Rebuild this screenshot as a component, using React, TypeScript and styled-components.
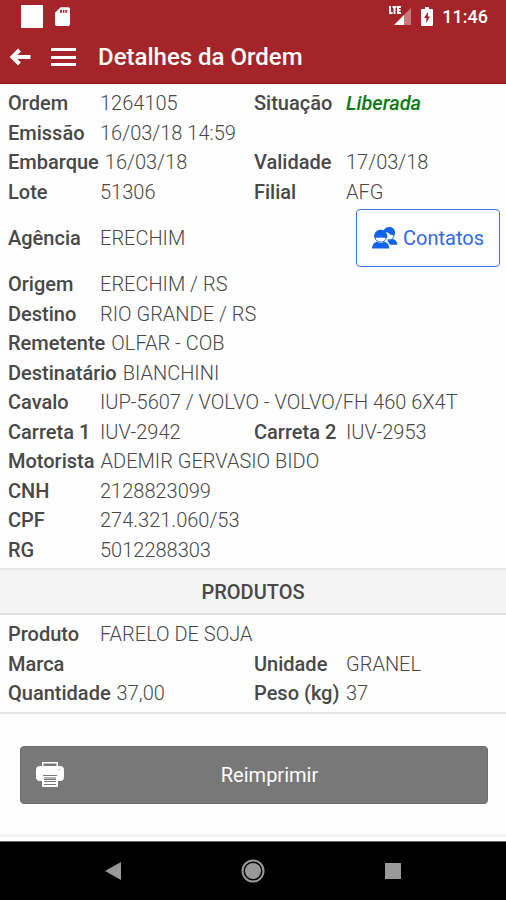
import React from "react";
import styled, { createGlobalStyle } from "styled-components";

const GlobalStyle = createGlobalStyle`
  * { box-sizing: border-box; }
  body {
    margin: 0;
    background: #fefefe;
    color: #484848;
    font-family: Roboto, "Liberation Sans", sans-serif;
    font-size: 20px;
  }
  button { font: inherit; cursor: pointer; }
`;

const Page = styled.div`
  min-height: 100vh;
  display: flex;
  flex-direction: column;
`;

const Header = styled.header`
  background: #a52429;
  color: #fff;
  border-bottom: 1px solid #93181d;
`;

const StatusBar = styled.div`
  height: 32px;
  padding: 0 18px 0 20px;
  display: flex;
  align-items: center;
  justify-content: space-between;
`;

const StatusGroup = styled.div<{ $gap: number }>`
  display: flex;
  align-items: center;
  gap: ${({ $gap }) => $gap}px;
`;

const Clock = styled.span`
  font-size: 18px;
  font-weight: 500;
`;

const Toolbar = styled.div`
  height: 51px;
  padding: 0 8px 2px;
  display: flex;
  align-items: center;
`;

const IconButton = styled.button`
  display: flex;
  padding: 0;
  border: 0;
  background: none;
  color: inherit;
  margin-right: 18px;
`;

const Title = styled.h1`
  margin: 0 0 0 4px;
  font-size: 24px;
  font-weight: 500;
`;

const Main = styled.main`
  flex: 1;
`;

const Details = styled.dl`
  margin: 0;
  padding: 0 6px 0 8px;
  display: grid;
  grid-template-columns: 1fr 1fr;
  grid-auto-rows: 30px 29px;
`;

const Section = styled.section`
  padding: 4px 0;
  border-bottom: 2px solid #e6e6e6;
`;

const Pair = styled.div<{ $wide?: boolean }>`
  display: flex;
  align-items: center;
  white-space: nowrap;
  grid-column: ${({ $wide }) => ($wide ? "1 / -1" : "auto")};
`;

const Label = styled.dt`
  min-width: 92px;
  padding-right: 6px;
  font-weight: 500;
`;

const Value = styled.dd<{ $released?: boolean }>`
  margin: 0;
  font-weight: ${({ $released }) => ($released ? 500 : 300)};
  font-style: ${({ $released }) => ($released ? "italic" : "normal")};
  color: ${({ $released }) => ($released ? "#0c7a14" : "inherit")};
`;

const AgencyRow = styled.div`
  display: flex;
  align-items: center;
  justify-content: space-between;
  padding: 3px 6px 2px 8px;
`;

const AgencyList = styled.dl`
  margin: 0;
`;

const ContactsButton = styled.button`
  height: 58px;
  padding: 0 15px;
  display: flex;
  align-items: center;
  gap: 5px;
  border: 1px solid #3d74ea;
  border-radius: 4px;
  background: #fff;
  color: #2f6be6;
`;

const SectionTitle = styled.h2`
  margin: 0;
  height: 45px;
  display: flex;
  align-items: center;
  justify-content: center;
  background: #f4f4f4;
  border-bottom: 2px solid #e0e0e0;
  font-size: 20px;
  font-weight: 500;
`;

const Actions = styled.div`
  padding: 32px 18px 30px 20px;
  border-bottom: 3px solid #f3f3f3;
`;

const PrintButton = styled.button`
  width: 100%;
  height: 58px;
  padding: 0 12px 0 15px;
  display: grid;
  grid-template-columns: 28px 1fr;
  align-items: center;
  border: 1px solid #6c6c6c;
  border-radius: 4px;
  background: #787878;
  color: #fff;
`;

const NavBar = styled.nav`
  height: 59px;
  background: #000;
  border-top: 1px solid #6a6a6a;
  display: flex;
  align-items: center;
  justify-content: center;
  gap: 112px;
`;

const NavButton = styled.button`
  width: 28px;
  height: 28px;
  padding: 0;
  border: 0;
  background: none;
  display: flex;
  align-items: center;
  justify-content: center;
`;

type Entry = { label: string; value: string; wide?: boolean; released?: boolean };

const order: Entry[] = [
  { label: "Ordem", value: "1264105" },
  { label: "Situação", value: "Liberada", released: true },
  { label: "Emissão", value: "16/03/18 14:59", wide: true },
  { label: "Embarque", value: "16/03/18" },
  { label: "Validade", value: "17/03/18" },
  { label: "Lote", value: "51306" },
  { label: "Filial", value: "AFG" },
];

const transport: Entry[] = [
  { label: "Origem", value: "ERECHIM / RS", wide: true },
  { label: "Destino", value: "RIO GRANDE / RS", wide: true },
  { label: "Remetente", value: "OLFAR - COB", wide: true },
  { label: "Destinatário", value: "BIANCHINI", wide: true },
  { label: "Cavalo", value: "IUP-5607 / VOLVO - VOLVO/FH 460 6X4T", wide: true },
  { label: "Carreta 1", value: "IUV-2942" },
  { label: "Carreta 2", value: "IUV-2953" },
  { label: "Motorista", value: "ADEMIR GERVASIO BIDO", wide: true },
  { label: "CNH", value: "2128823099", wide: true },
  { label: "CPF", value: "274.321.060/53", wide: true },
  { label: "RG", value: "5012288303", wide: true },
];

const product: Entry[] = [
  { label: "Produto", value: "FARELO DE SOJA", wide: true },
  { label: "Marca", value: "" },
  { label: "Unidade", value: "GRANEL" },
  { label: "Quantidade", value: "37,00" },
  { label: "Peso (kg)", value: "37" },
];

function DetailList({ entries }: { entries: Entry[] }) {
  return (
    <Details>
      {entries.map((e) => (
        <Pair key={e.label} $wide={e.wide}>
          <Label>{e.label}</Label>
          <Value $released={e.released}>{e.value}</Value>
        </Pair>
      ))}
    </Details>
  );
}

const SdCard = () => (
  <svg width="15" height="19" viewBox="0 0 16 20">
    <path fill="#fff" d="M6 0h8a2 2 0 0 1 2 2v16a2 2 0 0 1-2 2H2a2 2 0 0 1-2-2V6z" />
    <path fill="#a52429" d="M5.500 3h2v3h-2zM8.500 3h1.500v3H8.500zM11 3h2v3h-2z" />
  </svg>
);

const Signal = () => (
  <svg width="24" height="20" viewBox="0 0 24 20">
    <path fill="#c8797c" d="M23 2v17h-7V9z" />
    <path fill="#fff" d="M16 9v10H6z" />
    <path fill="none" stroke="#fff" strokeWidth="2" d="M2 0v7H4.500M4.500 1h4M6.500 1v7M13 1H10v6h3M10 4h2.500" />
  </svg>
);

const Battery = () => (
  <svg width="12" height="19" viewBox="0 0 12 19">
    <path fill="#fff" d="M4 0h4v2h3a1 1 0 0 1 1 1v15a1 1 0 0 1-1 1H1a1 1 0 0 1-1-1V3a1 1 0 0 1 1-1h3z" />
    <path fill="#a52429" d="M7 5v4.500h2L5.300 16v-5H3z" />
  </svg>
);

const BackArrow = () => (
  <svg width="24" height="20" viewBox="0 0 24 20" fill="none" stroke="#fff" strokeWidth="4">
    <path d="M22.500 10H5M11.500 3L4.500 10l7 7" />
  </svg>
);

const MenuLines = () => (
  <svg width="26" height="20" viewBox="0 0 26 20">
    <path fill="#fff" d="M1 1h25v3H1zM1 9h25v3H1zM1 16h25v3H1z" />
  </svg>
);

const People = () => (
  <svg width="26" height="22" viewBox="0 0 27 23">
    <g fill="#1262ee">
      <path d="M12 4.500C12.500 1.500 14.800 0 18 0c3.700 0 6 2.500 6 5.700 0 1-.3 2-.7 2.800-1.800.3-3.700-.1-5.300-1.500-.9-.9-2.200-1.500-3.500-1.500z" />
      <path d="M16.500 13c1.700 1.200 3.500 1 5-.4 2.500.6 4.500 2 5 5.900h-8c-.4-1.300-1.200-2.700-2.500-3.400z" />
      <path d="M2 11C2 5.800 5 3 9 3s7 2.800 7 8c-2.200.7-4.500.1-7 0-2.500.1-4.700.7-7 0z" />
      <path d="M0 22.500c.3-4.500 2.300-6.300 5.400-7 2.200 1.700 5.100 1.700 7.300 0 3 .7 5 2.500 5.300 7z" />
    </g>
    <path d="M3 10.500c.5 3.500 2.800 5.300 6 5.300s5.500-1.800 6-5.300" fill="none" stroke="#1262ee" />
    <path d="M16.500 13.200c3.200 1 6-1 6.600-4.700" fill="none" stroke="#1262ee" />
  </svg>
);

const Printer = () => (
  <svg width="28" height="26" viewBox="0 0 28 26">
    <path fill="#fff" fillRule="evenodd" d="M6 0h16v4h2a4 4 0 0 1 4 4v7a4 4 0 0 1-4 4h-2v6H6v-6H4a4 4 0 0 1-4-4V8a4 4 0 0 1 4-4h2zM7.500 1.500V4h13V1.500z" />
    <path fill="#787878" d="M7 13h14v1H7zM8 15h12v3H8zM8 19h12v1H8zM8 22h12v1H8z" />
    <path fill="#b5b5b5" d="M8 15h12v2H8z" />
    <circle cx="23.500" cy="7.500" r="1" fill="#ccc" />
  </svg>
);

export default function App() {
  return (
    <Page>
      <GlobalStyle />
      <Header>
        <StatusBar>
          <StatusGroup $gap={12}>
            <svg width="23" height="23"><path fill="#fff" d="M1 0h22v23H1z" /></svg>
            <SdCard />
          </StatusGroup>
          <StatusGroup $gap={9}>
            <Signal />
            <Battery />
            <Clock>11:46</Clock>
          </StatusGroup>
        </StatusBar>
        <Toolbar>
          <IconButton aria-label="Voltar"><BackArrow /></IconButton>
          <IconButton aria-label="Menu"><MenuLines /></IconButton>
          <Title>Detalhes da Ordem</Title>
        </Toolbar>
      </Header>
      <Main>
        <Section>
          <DetailList entries={order} />
          <AgencyRow>
            <AgencyList>
              <Pair>
                <Label>Agência</Label>
                <Value>ERECHIM</Value>
              </Pair>
            </AgencyList>
            <ContactsButton><People />Contatos</ContactsButton>
          </AgencyRow>
          <DetailList entries={transport} />
        </Section>
        <SectionTitle>PRODUTOS</SectionTitle>
        <Section>
          <DetailList entries={product} />
        </Section>
        <Actions>
          <PrintButton><Printer /><span>Reimprimir</span></PrintButton>
        </Actions>
      </Main>
      <NavBar>
        <NavButton aria-label="Voltar">
          <svg width="16" height="18"><path fill="#999" d="M16 0v18L0 9z" /></svg>
        </NavButton>
        <NavButton aria-label="Início">
          <svg width="24" height="24">
            <circle cx="12" cy="12" r="10.500" fill="none" stroke="#999" strokeWidth="2" />
            <circle cx="12" cy="12" r="8" fill="#999" />
          </svg>
        </NavButton>
        <NavButton aria-label="Recentes">
          <svg width="16" height="16"><path fill="#999" d="M0 0h16v16H0z" /></svg>
        </NavButton>
      </NavBar>
    </Page>
  );
}
